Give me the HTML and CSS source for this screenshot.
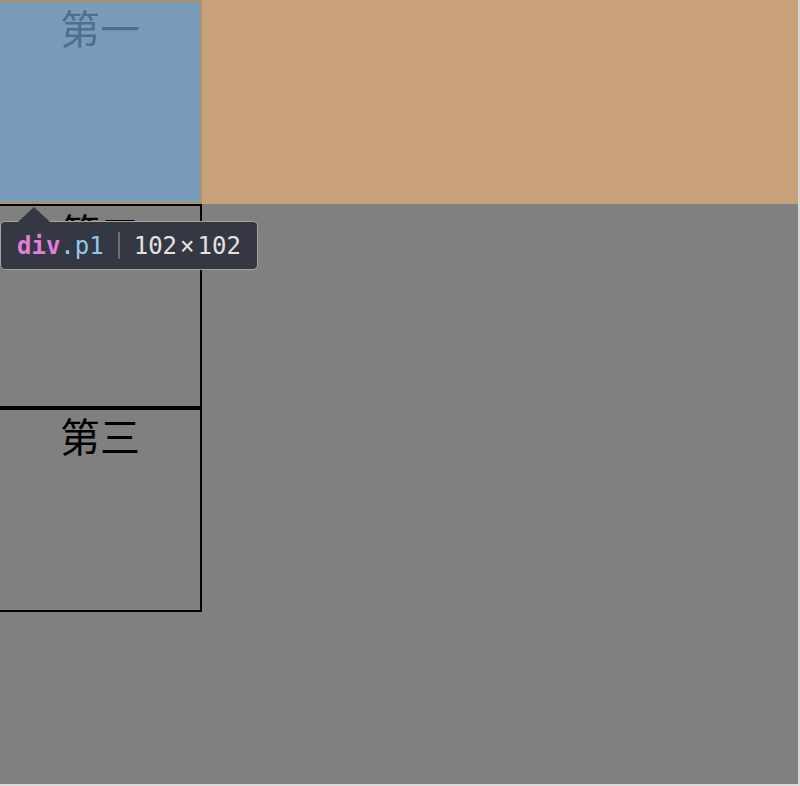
FILE: index.html
```html
<!DOCTYPE html>
<html>
<head>
<meta charset="utf-8">
<link rel="stylesheet" href="styles.css">
</head>
<body>
<div class="page">
  <div class="p1 box">第一</div>
  <div class="p2 box">第二</div>
  <div class="p3 box">第三</div>

  <div class="highlight">
    <div class="hl-box"></div>
    <div class="hl-margin"></div>
  </div>

  <div class="tooltip">
    <span class="tag">div</span><span class="cls">.p1</span>
    <span class="sep"></span>
    <span class="dim">102</span><span class="times">×</span><span class="dim">102</span>
  </div>
</div>
</body>
</html>
```

FILE: styles.css
```css
html {
  margin: 0;
  background: #d9d9d9;
}

body {
  margin: 0;
}

.page {
  position: relative;
  width: 798px;
  height: 784px;
  background: #808080;
  overflow: hidden;
}

.box {
  box-sizing: border-box;
  width: 204px;
  height: 204px;
  margin-left: -2px;
  border: 2px solid #000;
  padding-top: 5px;
  text-align: center;
  font-family: "Noto Sans CJK SC", "Noto Sans CJK JP", sans-serif;
  font-size: 40px;
  line-height: 1;
  color: #000;
}

.highlight {
  position: absolute;
  top: 0;
  left: -2px;
  right: 0;
  height: 204px;
  display: flex;
}

.hl-box {
  box-sizing: border-box;
  width: 204px;
  height: 204px;
  border: 2px solid rgba(255, 229, 153, 0.66);
  background: rgba(120, 168, 215, 0.66);
  background-clip: padding-box;
}

.hl-margin {
  flex: 1;
  background: rgba(237, 178, 119, 0.66);
}

.tooltip {
  position: absolute;
  left: 0;
  top: 221px;
  box-sizing: border-box;
  width: 258px;
  height: 49px;
  padding: 0 16px;
  display: flex;
  align-items: center;
  background: #343843;
  border: 1px solid #a3a4a7;
  border-radius: 5px;
  font-family: "DejaVu Sans Mono", monospace;
  font-size: 24px;
  color: #e2e2e2;
  white-space: nowrap;
}

.tooltip::before {
  content: "";
  position: absolute;
  left: 17px;
  top: -15px;
  width: 0;
  height: 0;
  border-left: 16px solid transparent;
  border-right: 16px solid transparent;
  border-bottom: 15px solid #343843;
}

.tag {
  color: #e27fdc;
  font-weight: bold;
}

.cls {
  color: #93c9f0;
}

.sep {
  width: 2px;
  height: 27px;
  margin: 0 14px 0 14px;
  background: #6b6e74;
}

.times {
  margin: 0 3px;
}
```
